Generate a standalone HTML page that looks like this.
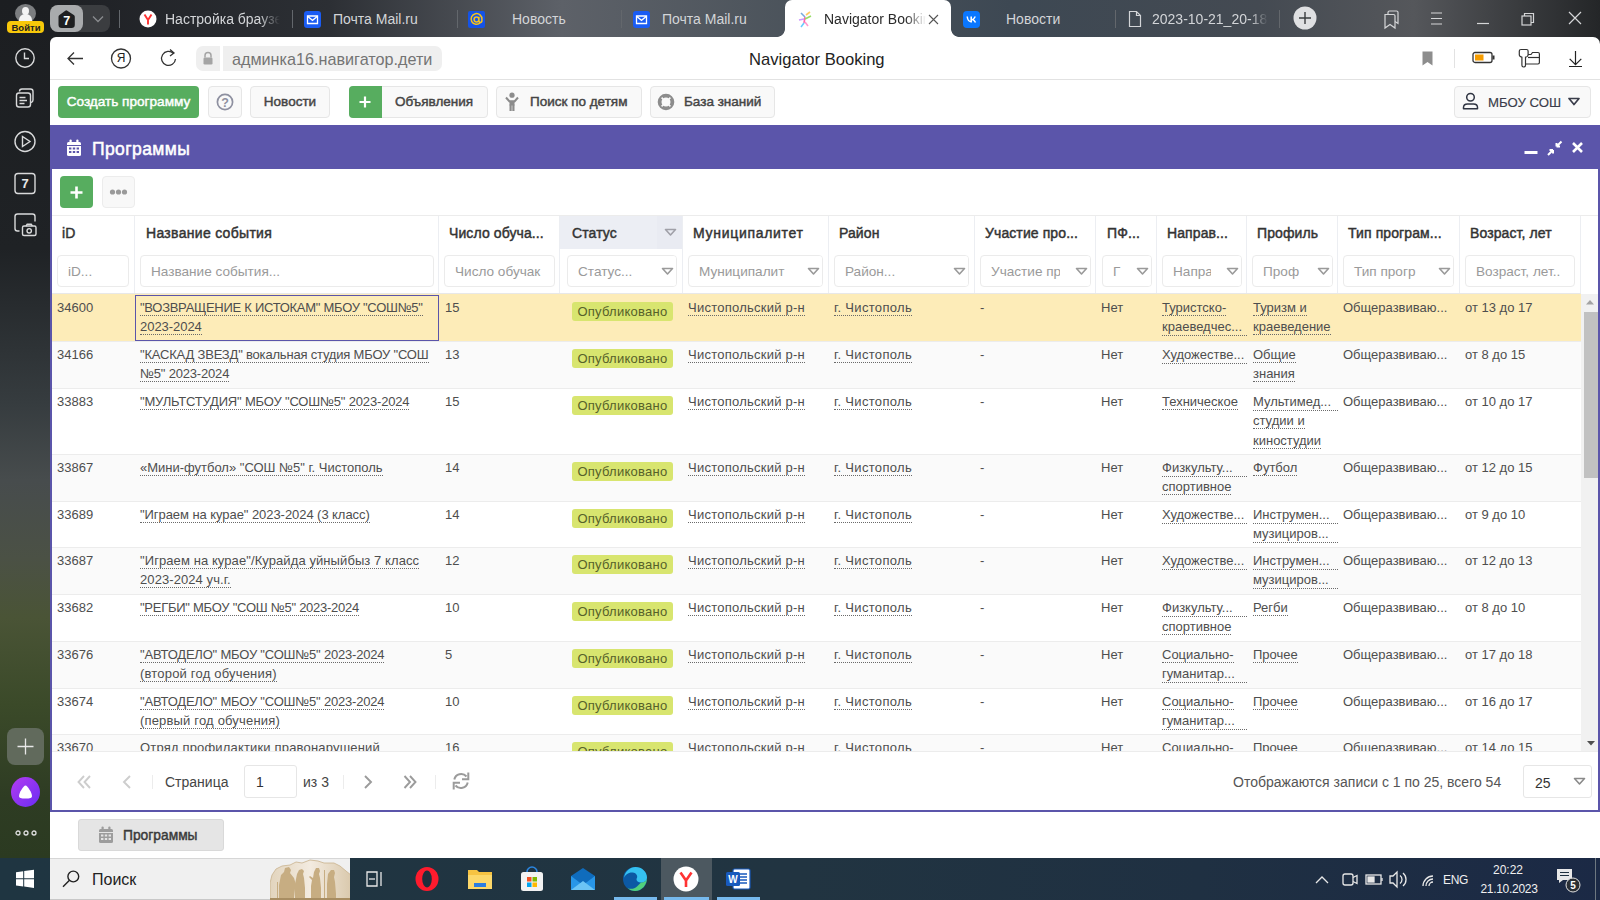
<!DOCTYPE html>
<html><head><meta charset="utf-8"><style>
*{box-sizing:border-box;margin:0;padding:0}
html,body{width:1600px;height:900px;overflow:hidden;font-family:"Liberation Sans",sans-serif;background:#fff;position:relative}
.a{position:absolute}
.nw{white-space:nowrap}
#side{left:0;top:0;width:50px;height:858px;background:linear-gradient(180deg,#1c1e21 0%,#1f2225 29%,#363c3f 47%,#474c4d 56%,#4b5145 65%,#4a5436 72%,#3b4a29 82%,#2e3c23 93%,#2b3a21 100%)}
#tabs{left:50px;top:0;width:1550px;height:46px;background:linear-gradient(90deg,#1e2024 0%,#2c2f34 18%,#5d6168 33%,#4b535b 48%,#3d4853 62%,#444a52 78%,#55575b 88%,#242628 100%)}
#toolbar{left:50px;top:37px;width:1550px;height:43px;background:#fff;border-top-left-radius:6px;border-top-right-radius:7px;border-bottom:1px solid #e2e2e2}
#taskbar{left:0;top:858px;width:1600px;height:42px;background:linear-gradient(90deg,#1f3541 0%,#213441 50%,#1f3042 75%,#1b2945 100%)}
.tt{color:#d3d5d8;font-size:14px;top:11px}
.vsep{width:1px;background:#63676c}
.btn{height:32px;top:86px;border:1px solid #e6e6e6;border-radius:4px;background:#f9f9f9;color:#454545;font-weight:normal;-webkit-text-stroke-width:0.45px;font-size:13.5px;line-height:30px}
.th{top:215px;height:37px;font-weight:normal;-webkit-text-stroke-width:0.45px;letter-spacing:0.1px;font-size:14px;color:#333;line-height:1}
.fi{top:255px;height:32px;border:1px solid #ebebeb;border-radius:4px;background:#fff;color:#9a9a9a;font-size:13.6px;overflow:hidden}
.fi span{position:absolute;left:10px;top:8px;white-space:nowrap}
.tri{position:absolute;width:0;height:0}
.cell{font-size:13px;color:#4e4e4e;line-height:19.5px;white-space:nowrap}
.u{border-bottom:1px dotted #6a6a6a}
.badge{background:#d8e56f;color:#56612a;font-size:13px;border-radius:3px;height:19px;line-height:19px;padding:0 5.4px;letter-spacing:0.25px}
</style></head><body>
<div id="side" class="a"></div>
<div class="a" style="left:15px;top:4px;width:21px;height:19px;border-radius:50%;background:#7c7e80;overflow:hidden"><div class="a" style="left:7px;top:3px;width:7px;height:8px;border-radius:50%;background:#f4f4f4"></div><div class="a" style="left:4px;top:10px;width:13px;height:12px;border-radius:6px 6px 0 0;background:#f4f4f4"></div></div>
<div class="a nw" style="left:7px;top:21px;width:37px;height:12px;border-radius:4px;background:#f8c80a;color:#222;font-size:9.5px;font-weight:bold;line-height:13px;text-align:center;padding-left:1px">Войти</div>
<svg class="a" style="left:0;top:40px" width="50" height="200" viewBox="0 40 50 200" fill="none" stroke="#d9dadb" stroke-width="1.4">
<circle cx="25" cy="58" r="9.2"/><path d="M24.5 52.5v6h4.5"/>
<rect x="16.5" y="93" width="14" height="14" rx="2.5"/><path d="M19.5 91.5c0-1.5 1-2.5 2.5-2.5h8.5c1.5 0 2.5 1 2.5 2.5v8.5c0 1.3-.8 2.3-2 2.5"/><path d="M19.5 97.5h6M19.5 100.5h7.5M19.5 103.5h5"/>
<circle cx="25" cy="141.5" r="10"/><path d="M22.5 136.5v10l7.5-5z"/>
<rect x="15" y="173.5" width="20" height="20" rx="3"/>
<path d="M19.5 231h-2a2.5 2.5 0 0 1-2.5-2.5v-12a2.5 2.5 0 0 1 2.5-2.5h15a2.5 2.5 0 0 1 2.5 2.5v5"/>
<rect x="22.5" y="226" width="13.5" height="9.5" rx="1.5" /><circle cx="29.2" cy="230.8" r="2.2"/><path d="M26 226l1.2-1.8h4l1.2 1.8"/>
</svg>
<div class="a nw" style="left:15px;top:174px;width:20px;height:20px;text-align:center;color:#e8e8e8;font-weight:bold;font-size:13px;line-height:20px">7</div>
<div class="a" style="left:7px;top:728px;width:37px;height:37px;border-radius:8px;background:#616a5c"></div>
<svg class="a" style="left:7px;top:728px" width="37" height="37"><path d="M18.5 10.5v16M10.5 18.5h16" stroke="#e8e8e8" stroke-width="1.3"/></svg>
<div class="a" style="left:11px;top:777px;width:29px;height:30px;border-radius:50%;background:linear-gradient(135deg,#b43cf0,#6a2cf5)"></div>
<svg class="a" style="left:11px;top:777px" width="29" height="30"><path d="M14.5 8.5c-2 0-6.5 7.5-6.5 10.5 0 2 2 2.6 6.5 2.6s6.5-.6 6.5-2.6c0-3-4.5-10.5-6.5-10.5z" fill="#fff"/></svg>
<svg class="a" style="left:14px;top:829px" width="24" height="8"><circle cx="4" cy="4" r="2" fill="none" stroke="#ddd" stroke-width="1.3"/><circle cx="12" cy="4" r="2" fill="none" stroke="#ddd" stroke-width="1.3"/><circle cx="20" cy="4" r="2" fill="none" stroke="#ddd" stroke-width="1.3"/></svg>
<div id="tabs" class="a"></div>
<div class="a" style="left:50px;top:5px;width:60px;height:27px;border-radius:8px;background:#3b3d40"></div>
<div class="a" style="left:50px;top:5px;width:33px;height:27px;border-radius:8px;background:#a9abad"></div>
<svg class="a" style="left:57px;top:9px" width="20" height="20"><path d="M8.3 1.7a1.8 1.8 0 0 1 2 0l6.5 4.3a2.2 2.2 0 0 1 1 1.8v7.9a3.3 3.3 0 0 1-3.3 3.3H4.8a3.3 3.3 0 0 1-3.3-3.3V7.8a2.2 2.2 0 0 1 1-1.8z" fill="#1e1f21"/><text x="9.7" y="15.5" text-anchor="middle" font-family="Liberation Sans" font-weight="bold" font-size="12.5" fill="#fff">7</text></svg>
<svg class="a" style="left:91px;top:14px" width="14" height="10"><path d="M2 2.5l5 5 5-5" fill="none" stroke="#8a8c8f" stroke-width="1.3"/></svg>
<div class="a vsep" style="left:119px;top:10px;height:18px"></div>
<svg class="a" style="left:139px;top:10px" width="18" height="18"><circle cx="9" cy="9" r="8.5" fill="#fff"/><path d="M5.5 4.5l3.5 5.5v4.5M12.5 4.5L9 10" fill="none" stroke="#f33" stroke-width="1.9"/></svg>
<div class="a nw tt" style="left:165px;width:115px;overflow:hidden;-webkit-mask-image:linear-gradient(90deg,#000 82%,transparent)">Настройка браузера</div>
<div class="a vsep" style="left:292px;top:10px;height:18px"></div>
<svg class="a" style="left:304px;top:11px" width="17" height="17"><rect x="0" y="0" width="17" height="17" rx="3" fill="#1a5cf3"/><path d="M3.5 5h10v7.5h-10z" fill="none" stroke="#fff" stroke-width="1.3"/><path d="M3.5 5.3l5 4 5-4" fill="none" stroke="#fff" stroke-width="1.3"/></svg>
<div class="a nw tt" style="left:333px">Почта Mail.ru</div>
<div class="a vsep" style="left:457px;top:10px;height:18px"></div>
<svg class="a" style="left:468px;top:11px" width="17" height="17"><rect width="17" height="17" rx="2" fill="#1553e6"/><path d="M12.3 11.8A5.4 5.4 0 1 1 13.9 8.3v1.2c0 1.1-.6 1.9-1.5 1.9s-1.5-.8-1.5-1.9V5.8M10.9 8.5a2.4 2.4 0 1 1-4.8 0 2.4 2.4 0 0 1 4.8 0z" fill="none" stroke="#f7c21a" stroke-width="1.5"/></svg>
<div class="a nw tt" style="left:512px">Новость</div>
<div class="a vsep" style="left:621px;top:10px;height:18px"></div>
<svg class="a" style="left:633px;top:11px" width="17" height="17"><rect x="0" y="0" width="17" height="17" rx="3" fill="#1a5cf3"/><path d="M3.5 5h10v7.5h-10z" fill="none" stroke="#fff" stroke-width="1.3"/><path d="M3.5 5.3l5 4 5-4" fill="none" stroke="#fff" stroke-width="1.3"/></svg>
<div class="a nw tt" style="left:662px">Почта Mail.ru</div>
<div class="a" style="left:785px;top:0;width:166px;height:37px;background:#fff;border-radius:7px 7px 0 0"></div>
<div class="a" style="left:777px;top:29px;width:8px;height:8px;background:radial-gradient(circle at 0 0,transparent 7.5px,#fff 8.2px)"></div>
<div class="a" style="left:951px;top:29px;width:8px;height:8px;background:radial-gradient(circle at 100% 0,transparent 7.5px,#fff 8.2px)"></div>
<svg class="a" style="left:797px;top:10px" width="18" height="19"><g stroke-width="1.6" fill="none">
<path d="M4 3l4 4" stroke="#7ad"/><path d="M9 5l4-3" stroke="#fc6"/><path d="M8 7l-1 6" stroke="#f6a"/><path d="M8 9l6-3" stroke="#9d6"/><path d="M7 13l-3 4" stroke="#6cf"/><path d="M8 12l3 4" stroke="#f9c"/><path d="M2 10l5-1" stroke="#c9f"/></g></svg>
<div class="a nw tt" style="left:824px;color:#2a2a2a;width:102px;overflow:hidden;-webkit-mask-image:linear-gradient(90deg,#000 80%,transparent)">Navigator Booking</div>
<svg class="a" style="left:928px;top:14px" width="11" height="11"><path d="M1 1l9 9M10 1l-9 9" stroke="#555" stroke-width="1.1"/></svg>
<svg class="a" style="left:963px;top:11px" width="17" height="17"><rect width="17" height="17" rx="4" fill="#0a77ff"/><path d="M3.5 5.5c.3 3.8 2.3 6 5.5 6V9.3c1.2.1 2 1 2.4 2.2h1.8c-.6-1.8-1.7-2.7-2.4-3 .8-.5 1.7-1.4 2-2.9h-1.6c-.4 1.3-1.3 2.3-2.2 2.4V5.5H7.4v4.4C6.3 9.6 5 8.4 5 5.5z" fill="#fff"/></svg>
<div class="a nw tt" style="left:1006px">Новости</div>
<div class="a vsep" style="left:1115px;top:10px;height:18px"></div>
<svg class="a" style="left:1128px;top:10px" width="14" height="18"><path d="M1.5 1.5h7l4 4v11h-11z M8.5 1.5v4h4" fill="none" stroke="#d3d5d8" stroke-width="1.2"/></svg>
<div class="a nw tt" style="left:1152px;width:116px;overflow:hidden;-webkit-mask-image:linear-gradient(90deg,#000 85%,transparent)">2023-10-21_20-18-06</div>
<div class="a vsep" style="left:1279px;top:10px;height:18px"></div>
<svg class="a" style="left:1293px;top:6px" width="24" height="24"><circle cx="12" cy="12" r="11.5" fill="#dfe0e2"/><path d="M12 6v12M6 12h12" stroke="#3a3c3f" stroke-width="1.4"/></svg>
<svg class="a" style="left:1370px;top:0" width="230" height="37" fill="none" stroke="#d5d6d8" stroke-width="1.2">
<path d="M15 14.5h8.5a1.5 1.5 0 0 1 1.5 1.5v12l-5-3.5-5 3.5z"/><path d="M18 14.5v-2a1.5 1.5 0 0 1 1.5-1.5h7a1.5 1.5 0 0 1 1.5 1.5v11l-3-2"/>
<path d="M61 13h11M61 18.5h11M61 24h11"/>
<path d="M107 23.5h12"/>
<rect x="152" y="16" width="9" height="9" /><path d="M154.5 16v-2.5h9v9h-2.5"/>
<path d="M199 12l12 12M211 12l-12 12"/>
</svg>
<div id="toolbar" class="a"></div>
<svg class="a" style="left:50px;top:37px" width="150" height="43" fill="none" stroke="#333" stroke-width="1.3">
<path d="M18 21.5h15M24 15.5l-6 6 6 6"/>
<circle cx="71" cy="21.5" r="9.5"/>
<path d="M123.5 16.5a7 7 0 1 0 2 5.5"/><path d="M120 12.5l4 3.5-4 3" />
</svg>
<div class="a nw" style="left:112px;top:50px;width:18px;text-align:center;font-size:12px;color:#222;line-height:16px">Я</div>
<div class="a" style="left:196px;top:46px;width:24px;height:25px;border-radius:7px 0 0 7px;background:#efefef"></div>
<svg class="a" style="left:202px;top:51px" width="12" height="14"><path d="M3 6.5V4.5a3 3 0 0 1 6 0v2" fill="none" stroke="#a4a4a4" stroke-width="1.5"/><rect x="1.5" y="6.5" width="9" height="7" rx="1.2" fill="#a4a4a4"/></svg>
<div class="a" style="left:223px;top:46px;width:219px;height:25px;border-radius:0 7px 7px 0;background:#efefef"></div>
<div class="a nw" style="left:232px;top:49px;font-size:16.2px;color:#747474;line-height:20px">админка16.навигатор.дети</div>
<div class="a nw" style="left:749px;top:50px;font-size:16.6px;color:#222;line-height:20px">Navigator Booking</div>
<svg class="a" style="left:1420px;top:50px" width="16" height="17"><path d="M2.5 1.5h10v14l-5-3.5-5 3.5z" fill="#8d8d8d"/></svg>
<div class="a" style="left:1454px;top:49px;width:1px;height:19px;background:#e2e2e2"></div>
<svg class="a" style="left:1471px;top:50px" width="26" height="16"><rect x="2" y="2.5" width="19" height="10" rx="2" fill="none" stroke="#333" stroke-width="1.3"/><rect x="4" y="4.5" width="8.5" height="6" fill="#f59c00"/><rect x="21.5" y="5.5" width="2" height="4" fill="#333"/></svg>
<svg class="a" style="left:1516px;top:46px" width="26" height="24" fill="none" stroke="#333" stroke-width="1.2">
<path d="M5 3.5h5.5c1 0 1.6.6 1.6 1.6v4c0 .8-.5 1.3-1.3 1.6l-1.3.4v8.2c0 1-.8 1.7-1.7 1.7H7.6c-1 0-1.7-.7-1.7-1.7v-8.2l-1.4-.5C3.7 10.3 3.3 9.8 3.3 9V5.1c0-1 .7-1.6 1.7-1.6z"/>
<path d="M12 8.5h3l1.5-2h5.5c.8 0 1.4.6 1.4 1.4v8.7c0 .8-.6 1.4-1.4 1.4H10"/><path d="M12 11.5h11"/>
</svg>
<svg class="a" style="left:1566px;top:47px" width="20" height="24"><path d="M9.5 4v13M3.7 11.8l5.8 5.8 5.8-5.8M3 19.5h13" fill="none" stroke="#222" stroke-width="1.2"/></svg>
<div class="a nw" style="left:58px;top:86px;width:141px;height:32px;border-radius:4px;background:#57ad5f;color:#fff;font-weight:normal;-webkit-text-stroke-width:0.45px;font-size:13.6px;line-height:32px;text-align:center">Создать программу</div>
<div class="a btn" style="left:208px;width:34px"></div>
<svg class="a" style="left:216px;top:93px" width="18" height="18"><circle cx="9" cy="9" r="7.6" fill="none" stroke="#8e90a0" stroke-width="1.7"/><text x="9" y="13.5" text-anchor="middle" font-family="Liberation Sans" font-weight="bold" font-size="12.5" fill="#8e90a0">?</text></svg>
<div class="a btn nw" style="left:250px;width:80px;text-align:center">Новости</div>
<div class="a btn nw" style="left:349px;width:139px;padding-left:45px">Объявления</div>
<div class="a" style="left:349px;top:86px;width:33px;height:32px;border-radius:4px 0 0 4px;background:#57ad5f"></div>
<svg class="a" style="left:357px;top:94px" width="16" height="16"><path d="M8 2.5v11M2.5 8h11" stroke="#fff" stroke-width="2.2"/></svg>
<div class="a btn nw" style="left:496px;width:146px;padding-left:33px">Поиск по детям</div>
<svg class="a" style="left:504px;top:92px" width="16" height="20"><circle cx="8" cy="3.2" r="2.6" fill="#8c8c8c"/><path d="M2 5.5l3.5 4h5l3.5-4" stroke="#8c8c8c" stroke-width="2" fill="none"/><rect x="5.5" y="8.5" width="5" height="5" fill="#8c8c8c"/><rect x="5.5" y="12.5" width="2.2" height="6.5" fill="#8c8c8c"/><rect x="8.3" y="12.5" width="2.2" height="6.5" fill="#8c8c8c"/></svg>
<div class="a btn nw" style="left:650px;width:125px;padding-left:33px">База знаний</div>
<svg class="a" style="left:657px;top:93px" width="18" height="18"><circle cx="9" cy="9" r="6.4" fill="none" stroke="#8c8c8c" stroke-width="3.8"/><path d="M4.6 4.6l2.6 2.6M13.4 4.6l-2.6 2.6M4.6 13.4l2.6-2.6M13.4 13.4l-2.6-2.6" stroke="#f9f9f9" stroke-width="1.6"/></svg>
<div class="a btn nw" style="left:1454px;width:137px;padding-left:33px;-webkit-text-stroke-width:0.15px;color:#3a3d4a;font-size:13.2px;line-height:31px">МБОУ СОШ</div>
<svg class="a" style="left:1461px;top:92px" width="18" height="20"><circle cx="9.5" cy="5.3" r="3.8" fill="none" stroke="#2f3442" stroke-width="1.5"/><path d="M2.5 16.8v-1.3c0-2.2 1.8-3.6 4-3.6h6c2.2 0 4 1.4 4 3.6v1.3z" fill="none" stroke="#2f3442" stroke-width="1.5" stroke-linejoin="round"/></svg>
<svg class="a" style="left:1567px;top:96px" width="14" height="12"><path d="M2 2.5h10L7 8.5z" fill="none" stroke="#3a3d4a" stroke-width="1.7" stroke-linejoin="round"/></svg>
<div class="a" style="left:50px;top:125px;width:1550px;height:687px;border:2px solid #5b55aa;border-top:0;background:#fff"></div>
<div class="a" style="left:50px;top:125px;width:1550px;height:44px;background:#5b55aa"></div>
<svg class="a" style="left:66px;top:139px" width="16" height="18"><rect x="1" y="3" width="14" height="14" rx="1.5" fill="#fff"/><rect x="3.5" y="0.5" width="2.2" height="4" rx="1" fill="#fff"/><rect x="10.3" y="0.5" width="2.2" height="4" rx="1" fill="#fff"/><g fill="#5b55aa"><rect x="1" y="6" width="14" height="1"/><rect x="3" y="8.5" width="2.4" height="2"/><rect x="6.8" y="8.5" width="2.4" height="2"/><rect x="10.6" y="8.5" width="2.4" height="2"/><rect x="3" y="12" width="2.4" height="2"/><rect x="6.8" y="12" width="2.4" height="2"/><rect x="10.6" y="12" width="2.4" height="2"/></g></svg>
<div class="a nw" style="left:92px;top:139px;font-size:17.5px;font-weight:normal;-webkit-text-stroke-width:0.5px;letter-spacing:0.4px;color:#fff;line-height:20px">Программы</div>
<svg class="a" style="left:1520px;top:138px" width="70" height="20"><path d="M4.5 14.5h13" stroke="#fff" stroke-width="3"/><path d="M28 17l5-5M33 12v3.5M33 12h-3.5M41.5 3.5l-5 5M36.5 8.5V5M36.5 8.5H40" stroke="#fff" stroke-width="2" fill="none"/><path d="M53 5l9 9M62 5l-9 9" stroke="#fff" stroke-width="2.6"/></svg>
<div class="a" style="left:60px;top:176px;width:33px;height:32px;border-radius:4px;background:#57ad5f"></div>
<svg class="a" style="left:68px;top:184px" width="17" height="17"><path d="M8.5 2.5v12M2.5 8.5h12" stroke="#fff" stroke-width="2.6"/></svg>
<div class="a" style="left:102px;top:176px;width:33px;height:32px;border-radius:4px;background:#f8f8f8;border:1px solid #ececec"></div>
<svg class="a" style="left:108px;top:187px" width="21" height="10"><circle cx="4.5" cy="5" r="2.6" fill="#9a9a9a"/><circle cx="10.5" cy="5" r="2.6" fill="#9a9a9a"/><circle cx="16.5" cy="5" r="2.6" fill="#9a9a9a"/></svg>
<div class="a" style="left:52px;top:215px;width:1546px;height:1px;background:#ececec"></div>
<div class="a" style="left:560px;top:216px;width:122px;height:33px;background:#eceef4"></div>
<div class="a" style="left:657px;top:216px;width:25px;height:33px;background:#e9ebf2"></div>
<div class="a" style="left:134px;top:216px;width:1px;height:78px;background:#eceef2"></div>
<div class="a" style="left:438px;top:216px;width:1px;height:78px;background:#eceef2"></div>
<div class="a" style="left:559px;top:216px;width:1px;height:78px;background:#eceef2"></div>
<div class="a" style="left:682px;top:216px;width:1px;height:78px;background:#eceef2"></div>
<div class="a" style="left:828px;top:216px;width:1px;height:78px;background:#eceef2"></div>
<div class="a" style="left:974px;top:216px;width:1px;height:78px;background:#eceef2"></div>
<div class="a" style="left:1095px;top:216px;width:1px;height:78px;background:#eceef2"></div>
<div class="a" style="left:1156px;top:216px;width:1px;height:78px;background:#eceef2"></div>
<div class="a" style="left:1246px;top:216px;width:1px;height:78px;background:#eceef2"></div>
<div class="a" style="left:1337px;top:216px;width:1px;height:78px;background:#eceef2"></div>
<div class="a" style="left:1459px;top:216px;width:1px;height:78px;background:#eceef2"></div>
<div class="a" style="left:1580px;top:216px;width:1px;height:78px;background:#eceef2"></div>
<div class="a" style="left:52px;top:293px;width:1529px;height:1px;background:#e8e8e8"></div>
<div class="a th nw" style="left:62px;padding-top:11px;letter-spacing:0.1px">iD</div>
<div class="a th nw" style="left:146px;padding-top:11px;letter-spacing:0.3px">Название события</div>
<div class="a th nw" style="left:449px;padding-top:11px;letter-spacing:0.1px">Число обуча...</div>
<div class="a th nw" style="left:572px;padding-top:11px;letter-spacing:0.1px">Статус</div>
<div class="a th nw" style="left:693px;padding-top:11px;letter-spacing:0.7px">Муниципалитет</div>
<div class="a th nw" style="left:839px;padding-top:11px;letter-spacing:0.1px">Район</div>
<div class="a th nw" style="left:985px;padding-top:11px;letter-spacing:0.1px">Участие про...</div>
<div class="a th nw" style="left:1107px;padding-top:11px;letter-spacing:0.1px">ПФ...</div>
<div class="a th nw" style="left:1167px;padding-top:11px;letter-spacing:0.1px">Направ...</div>
<div class="a th nw" style="left:1257px;padding-top:11px;letter-spacing:0.1px">Профиль</div>
<div class="a th nw" style="left:1348px;padding-top:11px;letter-spacing:0.1px">Тип програм...</div>
<div class="a th nw" style="left:1470px;padding-top:11px;letter-spacing:0.1px">Возраст, лет</div>
<svg class="a" style="left:664px;top:228px" width="13" height="9"><path d="M1.5 1.5h10L6.5 7z" fill="none" stroke="#a0a0a8" stroke-width="1.6" stroke-linejoin="round"/></svg>
<div class="a fi" style="left:57px;width:72px"><span>iD...</span></div>
<div class="a fi" style="left:140px;width:294px"><span>Название события...</span></div>
<div class="a fi" style="left:444px;width:111px"><span>Число обучак</span></div>
<div class="a fi" style="left:567px;width:110px"><span>Статус...</span><div style="position:absolute;right:0;top:0;width:30px;height:30px;background:#fff"></div></div>
<svg class="a" style="left:661px;top:267px" width="13" height="9"><path d="M1.5 1.5h10L6.5 7z" fill="none" stroke="#9a9a9a" stroke-width="1.6" stroke-linejoin="round"/></svg>
<div class="a fi" style="left:688px;width:135px"><span>Муниципалит</span><div style="position:absolute;right:0;top:0;width:30px;height:30px;background:#fff"></div></div>
<svg class="a" style="left:807px;top:267px" width="13" height="9"><path d="M1.5 1.5h10L6.5 7z" fill="none" stroke="#9a9a9a" stroke-width="1.6" stroke-linejoin="round"/></svg>
<div class="a fi" style="left:834px;width:135px"><span>Район...</span><div style="position:absolute;right:0;top:0;width:30px;height:30px;background:#fff"></div></div>
<svg class="a" style="left:953px;top:267px" width="13" height="9"><path d="M1.5 1.5h10L6.5 7z" fill="none" stroke="#9a9a9a" stroke-width="1.6" stroke-linejoin="round"/></svg>
<div class="a fi" style="left:980px;width:111px"><span>Участие пр</span><div style="position:absolute;right:0;top:0;width:30px;height:30px;background:#fff"></div></div>
<svg class="a" style="left:1075px;top:267px" width="13" height="9"><path d="M1.5 1.5h10L6.5 7z" fill="none" stroke="#9a9a9a" stroke-width="1.6" stroke-linejoin="round"/></svg>
<div class="a fi" style="left:1102px;width:50px"><span>Г</span><div style="position:absolute;right:0;top:0;width:30px;height:30px;background:#fff"></div></div>
<svg class="a" style="left:1136px;top:267px" width="13" height="9"><path d="M1.5 1.5h10L6.5 7z" fill="none" stroke="#9a9a9a" stroke-width="1.6" stroke-linejoin="round"/></svg>
<div class="a fi" style="left:1162px;width:80px"><span>Напра</span><div style="position:absolute;right:0;top:0;width:30px;height:30px;background:#fff"></div></div>
<svg class="a" style="left:1226px;top:267px" width="13" height="9"><path d="M1.5 1.5h10L6.5 7z" fill="none" stroke="#9a9a9a" stroke-width="1.6" stroke-linejoin="round"/></svg>
<div class="a fi" style="left:1252px;width:81px"><span>Проф</span><div style="position:absolute;right:0;top:0;width:30px;height:30px;background:#fff"></div></div>
<svg class="a" style="left:1317px;top:267px" width="13" height="9"><path d="M1.5 1.5h10L6.5 7z" fill="none" stroke="#9a9a9a" stroke-width="1.6" stroke-linejoin="round"/></svg>
<div class="a fi" style="left:1343px;width:111px"><span>Тип прогр</span><div style="position:absolute;right:0;top:0;width:30px;height:30px;background:#fff"></div></div>
<svg class="a" style="left:1438px;top:267px" width="13" height="9"><path d="M1.5 1.5h10L6.5 7z" fill="none" stroke="#9a9a9a" stroke-width="1.6" stroke-linejoin="round"/></svg>
<div class="a fi" style="left:1465px;width:110px"><span>Возраст, лет..</span></div>
<div class="a" style="left:52px;top:294px;width:1529px;height:457px;overflow:hidden">
<div class="a" style="left:0;top:0px;width:1529px;height:47px;background:#fdecb8;"></div>
<div class="a cell" style="left:5px;top:3.6px;"><span class="" style="">34600</span></div>
<div class="a cell" style="left:88px;top:3.6px;"><span class="u" style="letter-spacing:-0.276px;">&quot;ВОЗВРАЩЕНИЕ К ИСТОКАМ&quot; МБОУ &quot;СОШ№5&quot;</span></div><div class="a cell" style="left:88px;top:23.1px;"><span class="u" style="letter-spacing:-0.041px;">2023-2024</span></div>
<div class="a cell" style="left:393px;top:3.6px;"><span class="" style="">15</span></div>
<div class="a badge nw" style="left:520px;top:8.4px">Опубликовано</div>
<div class="a cell" style="left:636px;top:3.6px;"><span class="u" style="letter-spacing:0.243px;">Чистопольский р-н</span></div>
<div class="a cell" style="left:782px;top:3.6px;"><span class="u" style="letter-spacing:0.318px;">г. Чистополь</span></div>
<div class="a cell" style="left:928px;top:3.6px;"><span class="" style="">-</span></div>
<div class="a cell" style="left:1049px;top:3.6px;"><span class="" style="">Нет</span></div>
<div class="a cell" style="left:1110px;top:3.6px;"><span class="u" style="">Туристско-</span></div><div class="a cell" style="left:1110px;top:23.1px;"><span class="u" style="display:inline-block;width:85px;line-height:17px;">краеведчес...</span></div>
<div class="a cell" style="left:1201px;top:3.6px;"><span class="u" style="">Туризм и</span></div><div class="a cell" style="left:1201px;top:23.1px;"><span class="u" style="">краеведение</span></div>
<div class="a cell" style="left:1291px;top:3.6px;"><span class="" style="">Общеразвиваю...</span></div>
<div class="a cell" style="left:1413px;top:3.6px;"><span class="" style="">от 13 до 17</span></div>
<div class="a" style="left:0;top:47px;width:1529px;height:47px;background:#fafafa;border-top:1px solid #ececec;"></div>
<div class="a cell" style="left:5px;top:50.6px;"><span class="" style="">34166</span></div>
<div class="a cell" style="left:88px;top:50.6px;"><span class="u" style="letter-spacing:-0.190px;">&quot;КАСКАД ЗВЕЗД&quot; вокальная студия МБОУ &quot;СОШ</span></div><div class="a cell" style="left:88px;top:70.1px;"><span class="u" style="letter-spacing:-0.183px;">№5&quot; 2023-2024</span></div>
<div class="a cell" style="left:393px;top:50.6px;"><span class="" style="">13</span></div>
<div class="a badge nw" style="left:520px;top:55.4px">Опубликовано</div>
<div class="a cell" style="left:636px;top:50.6px;"><span class="u" style="letter-spacing:0.243px;">Чистопольский р-н</span></div>
<div class="a cell" style="left:782px;top:50.6px;"><span class="u" style="letter-spacing:0.318px;">г. Чистополь</span></div>
<div class="a cell" style="left:928px;top:50.6px;"><span class="" style="">-</span></div>
<div class="a cell" style="left:1049px;top:50.6px;"><span class="" style="">Нет</span></div>
<div class="a cell" style="left:1110px;top:50.6px;"><span class="u" style="display:inline-block;width:85px;line-height:17px;">Художестве...</span></div>
<div class="a cell" style="left:1201px;top:50.6px;"><span class="u" style="">Общие</span></div><div class="a cell" style="left:1201px;top:70.1px;"><span class="u" style="">знания</span></div>
<div class="a cell" style="left:1291px;top:50.6px;"><span class="" style="">Общеразвиваю...</span></div>
<div class="a cell" style="left:1413px;top:50.6px;"><span class="" style="">от 8 до 15</span></div>
<div class="a" style="left:0;top:94px;width:1529px;height:66px;background:#ffffff;border-top:1px solid #ececec;"></div>
<div class="a cell" style="left:5px;top:97.6px;"><span class="" style="">33883</span></div>
<div class="a cell" style="left:88px;top:97.6px;"><span class="u" style="letter-spacing:-0.171px;">&quot;МУЛЬТСТУДИЯ&quot; МБОУ &quot;СОШ№5&quot; 2023-2024</span></div>
<div class="a cell" style="left:393px;top:97.6px;"><span class="" style="">15</span></div>
<div class="a badge nw" style="left:520px;top:102.4px">Опубликовано</div>
<div class="a cell" style="left:636px;top:97.6px;"><span class="u" style="letter-spacing:0.243px;">Чистопольский р-н</span></div>
<div class="a cell" style="left:782px;top:97.6px;"><span class="u" style="letter-spacing:0.318px;">г. Чистополь</span></div>
<div class="a cell" style="left:928px;top:97.6px;"><span class="" style="">-</span></div>
<div class="a cell" style="left:1049px;top:97.6px;"><span class="" style="">Нет</span></div>
<div class="a cell" style="left:1110px;top:97.6px;"><span class="u" style="">Техническое</span></div>
<div class="a cell" style="left:1201px;top:97.6px;"><span class="u" style="display:inline-block;width:85px;line-height:17px;">Мультимед...</span></div><div class="a cell" style="left:1201px;top:117.1px;"><span class="u" style="">студии и</span></div><div class="a cell" style="left:1201px;top:136.6px;"><span class="u" style="">киностудии</span></div>
<div class="a cell" style="left:1291px;top:97.6px;"><span class="" style="">Общеразвиваю...</span></div>
<div class="a cell" style="left:1413px;top:97.6px;"><span class="" style="">от 10 до 17</span></div>
<div class="a" style="left:0;top:160px;width:1529px;height:47px;background:#fafafa;border-top:1px solid #ececec;"></div>
<div class="a cell" style="left:5px;top:163.6px;"><span class="" style="">33867</span></div>
<div class="a cell" style="left:88px;top:163.6px;"><span class="u" style="letter-spacing:-0.010px;">«Мини-футбол» &quot;СОШ №5&quot; г. Чистополь</span></div>
<div class="a cell" style="left:393px;top:163.6px;"><span class="" style="">14</span></div>
<div class="a badge nw" style="left:520px;top:168.4px">Опубликовано</div>
<div class="a cell" style="left:636px;top:163.6px;"><span class="u" style="letter-spacing:0.243px;">Чистопольский р-н</span></div>
<div class="a cell" style="left:782px;top:163.6px;"><span class="u" style="letter-spacing:0.318px;">г. Чистополь</span></div>
<div class="a cell" style="left:928px;top:163.6px;"><span class="" style="">-</span></div>
<div class="a cell" style="left:1049px;top:163.6px;"><span class="" style="">Нет</span></div>
<div class="a cell" style="left:1110px;top:163.6px;"><span class="u" style="display:inline-block;width:85px;line-height:17px;">Физкульту...</span></div><div class="a cell" style="left:1110px;top:183.1px;"><span class="u" style="">спортивное</span></div>
<div class="a cell" style="left:1201px;top:163.6px;"><span class="u" style="">Футбол</span></div>
<div class="a cell" style="left:1291px;top:163.6px;"><span class="" style="">Общеразвиваю...</span></div>
<div class="a cell" style="left:1413px;top:163.6px;"><span class="" style="">от 12 до 15</span></div>
<div class="a" style="left:0;top:207px;width:1529px;height:46px;background:#ffffff;border-top:1px solid #ececec;"></div>
<div class="a cell" style="left:5px;top:210.6px;"><span class="" style="">33689</span></div>
<div class="a cell" style="left:88px;top:210.6px;"><span class="u" style="letter-spacing:-0.062px;">&quot;Играем на курае&quot; 2023-2024 (3 класс)</span></div>
<div class="a cell" style="left:393px;top:210.6px;"><span class="" style="">14</span></div>
<div class="a badge nw" style="left:520px;top:215.4px">Опубликовано</div>
<div class="a cell" style="left:636px;top:210.6px;"><span class="u" style="letter-spacing:0.243px;">Чистопольский р-н</span></div>
<div class="a cell" style="left:782px;top:210.6px;"><span class="u" style="letter-spacing:0.318px;">г. Чистополь</span></div>
<div class="a cell" style="left:928px;top:210.6px;"><span class="" style="">-</span></div>
<div class="a cell" style="left:1049px;top:210.6px;"><span class="" style="">Нет</span></div>
<div class="a cell" style="left:1110px;top:210.6px;"><span class="u" style="display:inline-block;width:85px;line-height:17px;">Художестве...</span></div>
<div class="a cell" style="left:1201px;top:210.6px;"><span class="u" style="display:inline-block;width:85px;line-height:17px;">Инструмен...</span></div><div class="a cell" style="left:1201px;top:230.1px;"><span class="u" style="display:inline-block;width:85px;line-height:17px;">музициров...</span></div>
<div class="a cell" style="left:1291px;top:210.6px;"><span class="" style="">Общеразвиваю...</span></div>
<div class="a cell" style="left:1413px;top:210.6px;"><span class="" style="">от 9 до 10</span></div>
<div class="a" style="left:0;top:253px;width:1529px;height:47px;background:#fafafa;border-top:1px solid #ececec;"></div>
<div class="a cell" style="left:5px;top:256.6px;"><span class="" style="">33687</span></div>
<div class="a cell" style="left:88px;top:256.6px;"><span class="u" style="letter-spacing:0.087px;">&quot;Играем на курае&quot;/Курайда уйныйбыз 7 класс</span></div><div class="a cell" style="left:88px;top:276.1px;"><span class="u" style="letter-spacing:0.084px;">2023-2024 уч.г.</span></div>
<div class="a cell" style="left:393px;top:256.6px;"><span class="" style="">12</span></div>
<div class="a badge nw" style="left:520px;top:261.4px">Опубликовано</div>
<div class="a cell" style="left:636px;top:256.6px;"><span class="u" style="letter-spacing:0.243px;">Чистопольский р-н</span></div>
<div class="a cell" style="left:782px;top:256.6px;"><span class="u" style="letter-spacing:0.318px;">г. Чистополь</span></div>
<div class="a cell" style="left:928px;top:256.6px;"><span class="" style="">-</span></div>
<div class="a cell" style="left:1049px;top:256.6px;"><span class="" style="">Нет</span></div>
<div class="a cell" style="left:1110px;top:256.6px;"><span class="u" style="display:inline-block;width:85px;line-height:17px;">Художестве...</span></div>
<div class="a cell" style="left:1201px;top:256.6px;"><span class="u" style="display:inline-block;width:85px;line-height:17px;">Инструмен...</span></div><div class="a cell" style="left:1201px;top:276.1px;"><span class="u" style="display:inline-block;width:85px;line-height:17px;">музициров...</span></div>
<div class="a cell" style="left:1291px;top:256.6px;"><span class="" style="">Общеразвиваю...</span></div>
<div class="a cell" style="left:1413px;top:256.6px;"><span class="" style="">от 12 до 13</span></div>
<div class="a" style="left:0;top:300px;width:1529px;height:47px;background:#ffffff;border-top:1px solid #ececec;"></div>
<div class="a cell" style="left:5px;top:303.6px;"><span class="" style="">33682</span></div>
<div class="a cell" style="left:88px;top:303.6px;"><span class="u" style="letter-spacing:-0.256px;">&quot;РЕГБИ&quot; МБОУ &quot;СОШ №5&quot; 2023-2024</span></div>
<div class="a cell" style="left:393px;top:303.6px;"><span class="" style="">10</span></div>
<div class="a badge nw" style="left:520px;top:308.4px">Опубликовано</div>
<div class="a cell" style="left:636px;top:303.6px;"><span class="u" style="letter-spacing:0.243px;">Чистопольский р-н</span></div>
<div class="a cell" style="left:782px;top:303.6px;"><span class="u" style="letter-spacing:0.318px;">г. Чистополь</span></div>
<div class="a cell" style="left:928px;top:303.6px;"><span class="" style="">-</span></div>
<div class="a cell" style="left:1049px;top:303.6px;"><span class="" style="">Нет</span></div>
<div class="a cell" style="left:1110px;top:303.6px;"><span class="u" style="display:inline-block;width:85px;line-height:17px;">Физкульту...</span></div><div class="a cell" style="left:1110px;top:323.1px;"><span class="u" style="">спортивное</span></div>
<div class="a cell" style="left:1201px;top:303.6px;"><span class="u" style="">Регби</span></div>
<div class="a cell" style="left:1291px;top:303.6px;"><span class="" style="">Общеразвиваю...</span></div>
<div class="a cell" style="left:1413px;top:303.6px;"><span class="" style="">от 8 до 10</span></div>
<div class="a" style="left:0;top:347px;width:1529px;height:47px;background:#fafafa;border-top:1px solid #ececec;"></div>
<div class="a cell" style="left:5px;top:350.6px;"><span class="" style="">33676</span></div>
<div class="a cell" style="left:88px;top:350.6px;"><span class="u" style="letter-spacing:-0.198px;">&quot;АВТОДЕЛО&quot; МБОУ &quot;СОШ№5&quot; 2023-2024</span></div><div class="a cell" style="left:88px;top:370.1px;"><span class="u" style="letter-spacing:0.194px;">(второй год обучения)</span></div>
<div class="a cell" style="left:393px;top:350.6px;"><span class="" style="">5</span></div>
<div class="a badge nw" style="left:520px;top:355.4px">Опубликовано</div>
<div class="a cell" style="left:636px;top:350.6px;"><span class="u" style="letter-spacing:0.243px;">Чистопольский р-н</span></div>
<div class="a cell" style="left:782px;top:350.6px;"><span class="u" style="letter-spacing:0.318px;">г. Чистополь</span></div>
<div class="a cell" style="left:928px;top:350.6px;"><span class="" style="">-</span></div>
<div class="a cell" style="left:1049px;top:350.6px;"><span class="" style="">Нет</span></div>
<div class="a cell" style="left:1110px;top:350.6px;"><span class="u" style="">Социально-</span></div><div class="a cell" style="left:1110px;top:370.1px;"><span class="u" style="display:inline-block;width:85px;line-height:17px;">гуманитар...</span></div>
<div class="a cell" style="left:1201px;top:350.6px;"><span class="u" style="">Прочее</span></div>
<div class="a cell" style="left:1291px;top:350.6px;"><span class="" style="">Общеразвиваю...</span></div>
<div class="a cell" style="left:1413px;top:350.6px;"><span class="" style="">от 17 до 18</span></div>
<div class="a" style="left:0;top:394px;width:1529px;height:46px;background:#ffffff;border-top:1px solid #ececec;"></div>
<div class="a cell" style="left:5px;top:397.6px;"><span class="" style="">33674</span></div>
<div class="a cell" style="left:88px;top:397.6px;"><span class="u" style="letter-spacing:-0.198px;">&quot;АВТОДЕЛО&quot; МБОУ &quot;СОШ№5&quot; 2023-2024</span></div><div class="a cell" style="left:88px;top:417.1px;"><span class="u" style="letter-spacing:0.173px;">(первый год обучения)</span></div>
<div class="a cell" style="left:393px;top:397.6px;"><span class="" style="">10</span></div>
<div class="a badge nw" style="left:520px;top:402.4px">Опубликовано</div>
<div class="a cell" style="left:636px;top:397.6px;"><span class="u" style="letter-spacing:0.243px;">Чистопольский р-н</span></div>
<div class="a cell" style="left:782px;top:397.6px;"><span class="u" style="letter-spacing:0.318px;">г. Чистополь</span></div>
<div class="a cell" style="left:928px;top:397.6px;"><span class="" style="">-</span></div>
<div class="a cell" style="left:1049px;top:397.6px;"><span class="" style="">Нет</span></div>
<div class="a cell" style="left:1110px;top:397.6px;"><span class="u" style="">Социально-</span></div><div class="a cell" style="left:1110px;top:417.1px;"><span class="u" style="display:inline-block;width:85px;line-height:17px;">гуманитар...</span></div>
<div class="a cell" style="left:1201px;top:397.6px;"><span class="u" style="">Прочее</span></div>
<div class="a cell" style="left:1291px;top:397.6px;"><span class="" style="">Общеразвиваю...</span></div>
<div class="a cell" style="left:1413px;top:397.6px;"><span class="" style="">от 16 до 17</span></div>
<div class="a" style="left:0;top:440px;width:1529px;height:47px;background:#fafafa;border-top:1px solid #ececec;"></div>
<div class="a cell" style="left:5px;top:443.6px;"><span class="" style="">33670</span></div>
<div class="a cell" style="left:88px;top:443.6px;"><span class="u" style="letter-spacing:0.175px;">Отряд профилактики правонарушений</span></div>
<div class="a cell" style="left:393px;top:443.6px;"><span class="" style="">16</span></div>
<div class="a badge nw" style="left:520px;top:448.4px">Опубликовано</div>
<div class="a cell" style="left:636px;top:443.6px;"><span class="u" style="letter-spacing:0.243px;">Чистопольский р-н</span></div>
<div class="a cell" style="left:782px;top:443.6px;"><span class="u" style="letter-spacing:0.318px;">г. Чистополь</span></div>
<div class="a cell" style="left:928px;top:443.6px;"><span class="" style="">-</span></div>
<div class="a cell" style="left:1049px;top:443.6px;"><span class="" style="">Нет</span></div>
<div class="a cell" style="left:1110px;top:443.6px;"><span class="u" style="">Социально-</span></div>
<div class="a cell" style="left:1201px;top:443.6px;"><span class="u" style="">Прочее</span></div>
<div class="a cell" style="left:1291px;top:443.6px;"><span class="" style="">Общеразвиваю...</span></div>
<div class="a cell" style="left:1413px;top:443.6px;"><span class="" style="">от 14 до 15</span></div>
</div>
<div class="a" style="left:135px;top:295px;width:304px;height:46px;border:1px solid #5b55aa"></div>
<div class="a" style="left:1581px;top:294px;width:17px;height:457px;background:#f1f1f1"></div>
<div class="a" style="left:1584px;top:312px;width:14px;height:166px;background:#c1c1c1"></div>
<svg class="a" style="left:1584px;top:298px" width="12" height="8"><path d="M2 6.5h8L6 2z" fill="#a3a3a3"/></svg>
<svg class="a" style="left:1585px;top:740px" width="12" height="8"><path d="M2 1h8L6 5.5z" fill="#505050"/></svg>
<div class="a" style="left:52px;top:751px;width:1546px;height:1px;background:#ececec"></div>
<svg class="a" style="left:70px;top:770px" width="410" height="24" fill="none" stroke-width="1.9" stroke-linecap="butt">
<path d="M14 6l-5.5 6 5.5 6M20 6l-5.5 6 5.5 6" stroke="#cdcdcd"/>
<path d="M60 6l-6 6 6 6" stroke="#cdcdcd"/>
<path d="M82.5 5v14" stroke="#ececec" stroke-width="1"/>
<path d="M273.5 5v14" stroke="#ececec" stroke-width="1"/>
<path d="M295 6l6 6-6 6" stroke="#9b9b9b"/>
<path d="M334.5 6l5.5 6-5.5 6M340 6l5.5 6-5.5 6" stroke="#9b9b9b"/>
<path d="M365.5 5v14" stroke="#ececec" stroke-width="1"/>
<path d="M384.3 9.5A7 7 0 0 1 396.5 6.5M398.3 2.5V9.2H392M397.7 12.5A7 7 0 0 1 385.5 15.5M383.7 19.5V12.8H390" stroke="#9b9b9b" stroke-width="2"/>
</svg>
<div class="a nw" style="left:165px;top:773px;font-size:14px;color:#444;line-height:18px">Страница</div>
<div class="a" style="left:244px;top:765px;width:53px;height:33px;border:1px solid #e6e6e6;border-radius:3px;background:#fff"></div>
<div class="a nw" style="left:256px;top:773px;font-size:14px;color:#333;line-height:18px">1</div>
<div class="a nw" style="left:303px;top:773px;font-size:14px;color:#444;line-height:18px">из 3</div>
<div class="a nw" style="left:1233px;top:773px;font-size:14px;color:#555;line-height:18px">Отображаются записи с 1 по 25, всего 54</div>
<div class="a" style="left:1523px;top:765px;width:69px;height:33px;border:1px solid #e6e6e6;border-radius:3px;background:#fff"></div>
<div class="a nw" style="left:1535px;top:774px;font-size:14px;color:#333;line-height:18px">25</div>
<svg class="a" style="left:1573px;top:777px" width="13" height="9"><path d="M1.5 1.5h10L6.5 7z" fill="none" stroke="#8a8a8a" stroke-width="1.6" stroke-linejoin="round"/></svg>
<div class="a" style="left:78px;top:819px;width:146px;height:32px;border-radius:3px;background:#e5e5e5;border:1px solid #d9d9d9"></div>
<svg class="a" style="left:98px;top:826px" width="16" height="18"><rect x="1" y="3" width="14" height="14" rx="1.5" fill="#9d9d9d"/><rect x="3.5" y="0.5" width="2.2" height="4" rx="1" fill="#9d9d9d"/><rect x="10.3" y="0.5" width="2.2" height="4" rx="1" fill="#9d9d9d"/><g fill="#e5e5e5"><rect x="1" y="6" width="14" height="1"/><rect x="3" y="8.5" width="2.4" height="2"/><rect x="6.8" y="8.5" width="2.4" height="2"/><rect x="10.6" y="8.5" width="2.4" height="2"/><rect x="3" y="12" width="2.4" height="2"/><rect x="6.8" y="12" width="2.4" height="2"/><rect x="10.6" y="12" width="2.4" height="2"/></g></svg>
<div class="a nw" style="left:123px;top:828px;font-size:13.8px;font-weight:normal;-webkit-text-stroke-width:0.45px;color:#3a3a3a;line-height:16px">Программы</div>
<div id="taskbar" class="a"></div>
<svg class="a" style="left:15px;top:869px" width="20" height="20"><g fill="#fff"><path d="M1 3.2l7.2-1v7.1H1z"/><path d="M9.2 2.1L19 .8v8.5H9.2z"/><path d="M1 10.3h7.2v7.1L1 16.4z"/><path d="M9.2 10.3H19v8.6l-9.8-1.3z"/></g></svg>
<div class="a" style="left:50px;top:858px;width:300px;height:42px;background:#f0f0f0;border-top:1px solid #d6d6d6;border-bottom:1px solid #c8c8c8"></div>
<svg class="a" style="left:60px;top:867px" width="24" height="24"><circle cx="13.3" cy="9.5" r="5.4" fill="none" stroke="#222" stroke-width="1.4"/><path d="M9.5 13.3L3 19.8" stroke="#222" stroke-width="1.5"/></svg>
<div class="a nw" style="left:92px;top:870px;font-size:16px;color:#222;line-height:20px">Поиск</div>
<svg class="a" style="left:270px;top:858px" width="80" height="42">
<defs><linearGradient id="rg" x1="0" x2="1"><stop offset="0" stop-color="#e2d4bd"/><stop offset="0.5" stop-color="#f3ebe0"/><stop offset="1" stop-color="#dac9ad"/></linearGradient></defs>
<path d="M0 42V25l2-8 4-6 6-3 8-1 6-3 6 1 8-3 8 1 6 2 10 0 6 3 6 5 5 4v25z" fill="url(#rg)" stroke="#c9b38e" stroke-width="0.8"/>
<g fill="#c7ad82">
<path d="M9 40V27l2-10 3-3 1-4 4-1 2 3-1 3 4 5 3 10-2 1-1 9z"/><path d="M7 24h1v16H7z"/>
<path d="M25 40V26l2-10 2-4 3-1 2 2-1 3 1 4 1 10v10z"/>
<path d="M41 40V28l1-6-3-3 1-1 3 2 1-6 2-4 3 0 1 3-1 3 1 4 1 10v10z"/>
<path d="M57 40V26l1-10 3-4 3 0 1 3-1 4 1 5 1 12v4z"/><path d="M54 12h1v28h-1z"/>
</g>
<rect x="0" y="40" width="80" height="2" fill="#a88d62"/>
</svg>
<svg class="a" style="left:365px;top:869px" width="20" height="20" fill="none" stroke="#e8e8e8" stroke-width="1.3"><path d="M2 3h10v14H2zM2 3h10"/><path d="M16 3v14"/><path d="M4 10h6"/></svg>
<svg class="a" style="left:414px;top:866px" width="26" height="26"><ellipse cx="13" cy="13" rx="11.5" ry="12" fill="#ff1b2d"/><ellipse cx="13" cy="13" rx="4.8" ry="8.5" fill="#1f2f3d"/></svg>
<svg class="a" style="left:467px;top:867px" width="26" height="24"><path d="M1 3h9l2 2h13v17H1z" fill="#f6c342"/><path d="M1 8h24v14H1z" fill="#fcd86a"/><rect x="7" y="16" width="12" height="4" fill="#2a7de1"/></svg>
<svg class="a" style="left:519px;top:866px" width="26" height="26"><path d="M8 6a5 5 0 0 1 10 0" fill="none" stroke="#2b86e0" stroke-width="1.6"/><rect x="2" y="6" width="22" height="19" rx="2.5" fill="#f2f2f2"/><rect x="8" y="11" width="4.5" height="4.5" fill="#f25022"/><rect x="13.5" y="11" width="4.5" height="4.5" fill="#7fba00"/><rect x="8" y="16.5" width="4.5" height="4.5" fill="#00a4ef"/><rect x="13.5" y="16.5" width="4.5" height="4.5" fill="#ffb900"/></svg>
<svg class="a" style="left:570px;top:867px" width="26" height="24"><path d="M1 9L13 1l12 8v14H1z" fill="#0f6cbd"/><path d="M1 9l12 9 12-9v14H1z" fill="#2896e8"/><path d="M1 23l12-9 12 9z" fill="#6cc4f5"/></svg>
<svg class="a" style="left:622px;top:866px" width="26" height="26"><circle cx="13" cy="13" r="12" fill="#0c59a4"/><path d="M2 12C3 5 8 1 13.5 1 20 1 25 6 25 11.5c0 3-2.5 5-6 5-3 0-4.5-1.5-4.5-3 0-1 .7-1.7.7-2.7C15.2 8 12.5 6.5 10 6.5 6 6.5 3 9 2 12z" fill="#35c1f1"/><path d="M19 16.5c3.5 0 6-2 6-5 .3 7-5 13.5-12 13.5-2.8 0-5.5-1-7.5-3 3 1.5 7 1 9.5-1.5" fill="#51d07c"/></svg>
<div class="a" style="left:661px;top:858px;width:51px;height:42px;background:#4c5860"></div>
<svg class="a" style="left:673px;top:866px" width="26" height="26"><circle cx="13" cy="13" r="12.5" fill="#fff"/><path d="M7.5 6.5l5.5 8v6.5M18.5 6.5L13 14.5" fill="none" stroke="#f33" stroke-width="2.6"/></svg>
<svg class="a" style="left:725px;top:867px" width="26" height="24"><rect x="8" y="2" width="17" height="20" rx="1.5" fill="#fff" stroke="#185abd" stroke-width="1.2"/><path d="M12 7h10M12 10h10M12 13h10M12 16h10" stroke="#185abd" stroke-width="1.3"/><rect x="1" y="5" width="14" height="14" rx="1.5" fill="#185abd"/><text x="8" y="16" text-anchor="middle" font-family="Liberation Sans" font-weight="bold" font-size="10" fill="#fff">W</text></svg>
<div class="a" style="left:614px;top:897px;width:43px;height:3px;background:#76b9ed"></div>
<div class="a" style="left:664px;top:897px;width:45px;height:3px;background:#76b9ed"></div>
<div class="a" style="left:717px;top:897px;width:43px;height:3px;background:#76b9ed"></div>
<svg class="a" style="left:1310px;top:866px" width="140" height="26" fill="none" stroke="#e8e8e8" stroke-width="1.3">
<path d="M6 17l6-6 6 6"/>
<rect x="33" y="8" width="10" height="11" rx="2"/><path d="M43 11.5l4-2v8l-4-2"/>
<rect x="56" y="9" width="15" height="9"/><rect x="58" y="11" width="6" height="5" fill="#e8e8e8"/><path d="M72 12v3"/>
<path d="M80 10h3l4-4v15l-4-4h-3z"/><path d="M90 9.5a5 5 0 0 1 0 8M93 7a8.5 8.5 0 0 1 0 13"/>
<path d="M113 20a10 10 0 0 1 10-10M116 20a7 7 0 0 1 7-7M119 20a4 4 0 0 1 4-4"/>
</svg>
<div class="a nw" style="left:1443px;top:872px;font-size:12px;letter-spacing:-0.3px;color:#f0f0f0;line-height:16px">ENG</div>
<div class="a nw" style="left:1478px;top:862px;font-size:12px;color:#f0f0f0;line-height:16px;text-align:center;width:60px">20:22</div>
<div class="a nw" style="left:1464px;top:881px;font-size:12px;letter-spacing:-0.3px;color:#f0f0f0;line-height:16px;text-align:center;width:90px">21.10.2023</div>
<svg class="a" style="left:1553px;top:866px" width="30" height="30"><path d="M4 3h15v11h-9l-4 3v-3H4z" fill="#e8e8e8"/><path d="M7 6.5h9M7 9.5h9" stroke="#1f2f3d" stroke-width="1"/><circle cx="20" cy="19" r="7" fill="#2a2f35" stroke="#e0e0e0" stroke-width="1"/><text x="20" y="23" text-anchor="middle" font-family="Liberation Sans" font-size="10" font-weight="bold" fill="#fff">5</text></svg>
<div class="a" style="left:1595px;top:858px;width:1px;height:42px;background:#6d7780"></div>
</body></html>
